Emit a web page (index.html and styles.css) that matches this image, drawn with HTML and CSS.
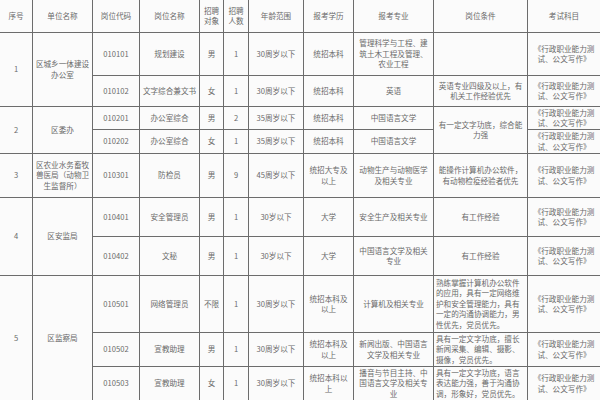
FILE: index.html
```html
<!DOCTYPE html>
<html lang="zh">
<head>
<meta charset="utf-8">
<link rel="stylesheet" href="styles.css">
</head>
<body>
<table class="jobs">
  <colgroup>
    <col class="c-no"><col class="c-unit"><col class="c-code"><col class="c-name"><col class="c-obj"><col class="c-num"><col class="c-age"><col class="c-edu"><col class="c-major"><col class="c-cond"><col class="c-exam">
  </colgroup>
  <tr class="r-head">
    <th>序号</th><th>单位名称</th><th>岗位代码</th><th>岗位名称</th><th>招聘<br>对象</th><th>招聘<br>人数</th><th>年龄范围</th><th>报考学历</th><th>报考专业</th><th>岗位条件</th><th>考试科目</th>
  </tr>
  <tr class="r-1a">
    <td rowspan="2">1</td><td rowspan="2">区城乡一体建设<br>办公室</td><td>010101</td><td>规划建设</td><td>男</td><td>1</td><td>30周岁以下</td><td>统招本科</td><td>管理科学与工程、建筑土木工程及管理、农业工程</td><td></td><td>《行政职业能力测试、公文写作》</td>
  </tr>
  <tr class="r-1b">
    <td>010102</td><td>文字综合兼文书</td><td>女</td><td>1</td><td>30周岁以下</td><td>统招本科</td><td>英语</td><td>英语专业四级及以上，有机关工作经验优先</td><td>《行政职业能力测试、公文写作》</td>
  </tr>
  <tr class="r-2a">
    <td rowspan="2">2</td><td rowspan="2">区委办</td><td>010201</td><td>办公室综合</td><td>男</td><td>2</td><td>35周岁以下</td><td>统招本科</td><td>中国语言文学</td><td rowspan="2">有一定文字功底，综合能力强</td><td>《行政职业能力测试、公文写作》</td>
  </tr>
  <tr class="r-2b">
    <td>010202</td><td>办公室综合</td><td>女</td><td>1</td><td>35周岁以下</td><td>统招本科</td><td>中国语言文学</td><td>《行政职业能力测试、公文写作》</td>
  </tr>
  <tr class="r-3">
    <td>3</td><td>区农业水务畜牧兽医局（动物卫生监督所）</td><td>010301</td><td>防检员</td><td>男</td><td>9</td><td>45周岁以下</td><td>统招大专及以上</td><td>动物生产与动物医学及相关专业</td><td>能操作计算机办公软件，有动物检疫经验者优先</td><td>《行政职业能力测试、公文写作》</td>
  </tr>
  <tr class="r-4a">
    <td rowspan="2">4</td><td rowspan="2">区安监局</td><td>010401</td><td>安全管理员</td><td>男</td><td>1</td><td>30岁以下</td><td>大学</td><td>安全生产及相关专业</td><td>有工作经验</td><td>《行政职业能力测试、公文写作》</td>
  </tr>
  <tr class="r-4b">
    <td>010402</td><td>文秘</td><td>男</td><td>1</td><td>30岁以下</td><td>大学</td><td>中国语言文学及相关专业</td><td>有工作经验</td><td>《行政职业能力测试、公文写作》</td>
  </tr>
  <tr class="r-5a">
    <td rowspan="3">5</td><td rowspan="3">区监察局</td><td>010501</td><td>网络管理员</td><td>不限</td><td>1</td><td>30周岁以下</td><td>统招本科及以上</td><td>计算机及相关专业</td><td class="left">熟练掌握计算机办公软件的应用，具有一定网络维护和安全管理能力，具有一定的沟通协调能力，男性优先，党员优先。</td><td>《行政职业能力测试、公文写作》</td>
  </tr>
  <tr class="r-5b">
    <td>010502</td><td>宣教助理</td><td>男</td><td>1</td><td>30周岁以下</td><td>统招本科及以上</td><td>新闻出版、中国语言文学及相关专业</td><td class="left">具有一定文字功底，擅长新闻采集、编辑、摄影、摄像，党员优先。</td><td>《行政职业能力测试、公文写作》</td>
  </tr>
  <tr class="r-5c">
    <td>010503</td><td>宣教助理</td><td>女</td><td>1</td><td>30周岁以下</td><td>统招本科以上</td><td>播音与节目主持、中国语言文学及相关专业</td><td class="left">具有一定文字功底，语言表达能力强，善于沟通协调，形象好，党员优先。</td><td>《行政职业能力测试、公文写作》</td>
  </tr>
</table>
</body>
</html>
```

FILE: styles.css
```css
html, body {
  margin: 0;
  padding: 0;
  background: #fbfbfb;
  overflow: hidden;
}
.jobs {
  border-collapse: collapse;
  table-layout: fixed;
  width: 601px;
  margin: -1px 0 0 -1px;
  font-family: "Noto Sans CJK SC", "Noto Sans", sans-serif;
  font-size: 7.6px;
  line-height: 10.5px;
  color: #6a6a6a;
}
.jobs th, .jobs td {
  border: 1.5px solid #6c6c6c;
  text-align: center;
  vertical-align: middle;
  padding: 0 2px;
  font-weight: normal;
  overflow: hidden;
}
.jobs td.left { text-align: left; }
.c-no { width: 33px; }
.c-unit { width: 60px; }
.c-code { width: 47px; }
.c-name { width: 60px; }
.c-obj { width: 24px; }
.c-num { width: 25px; }
.c-age { width: 55px; }
.c-edu { width: 50px; }
.c-major { width: 80px; }
.c-cond { width: 94px; }
.c-exam { width: 73px; }
.r-head { height: 33px; }
.r-1a { height: 43px; }
.r-1b { height: 31px; }
.r-2a { height: 23px; }
.r-2b { height: 24px; }
.r-3 { height: 44px; }
.r-4a { height: 39px; }
.r-4b { height: 39px; }
.r-5a { height: 57px; }
.r-5b { height: 34px; }
.r-5c { height: 34px; }
```
